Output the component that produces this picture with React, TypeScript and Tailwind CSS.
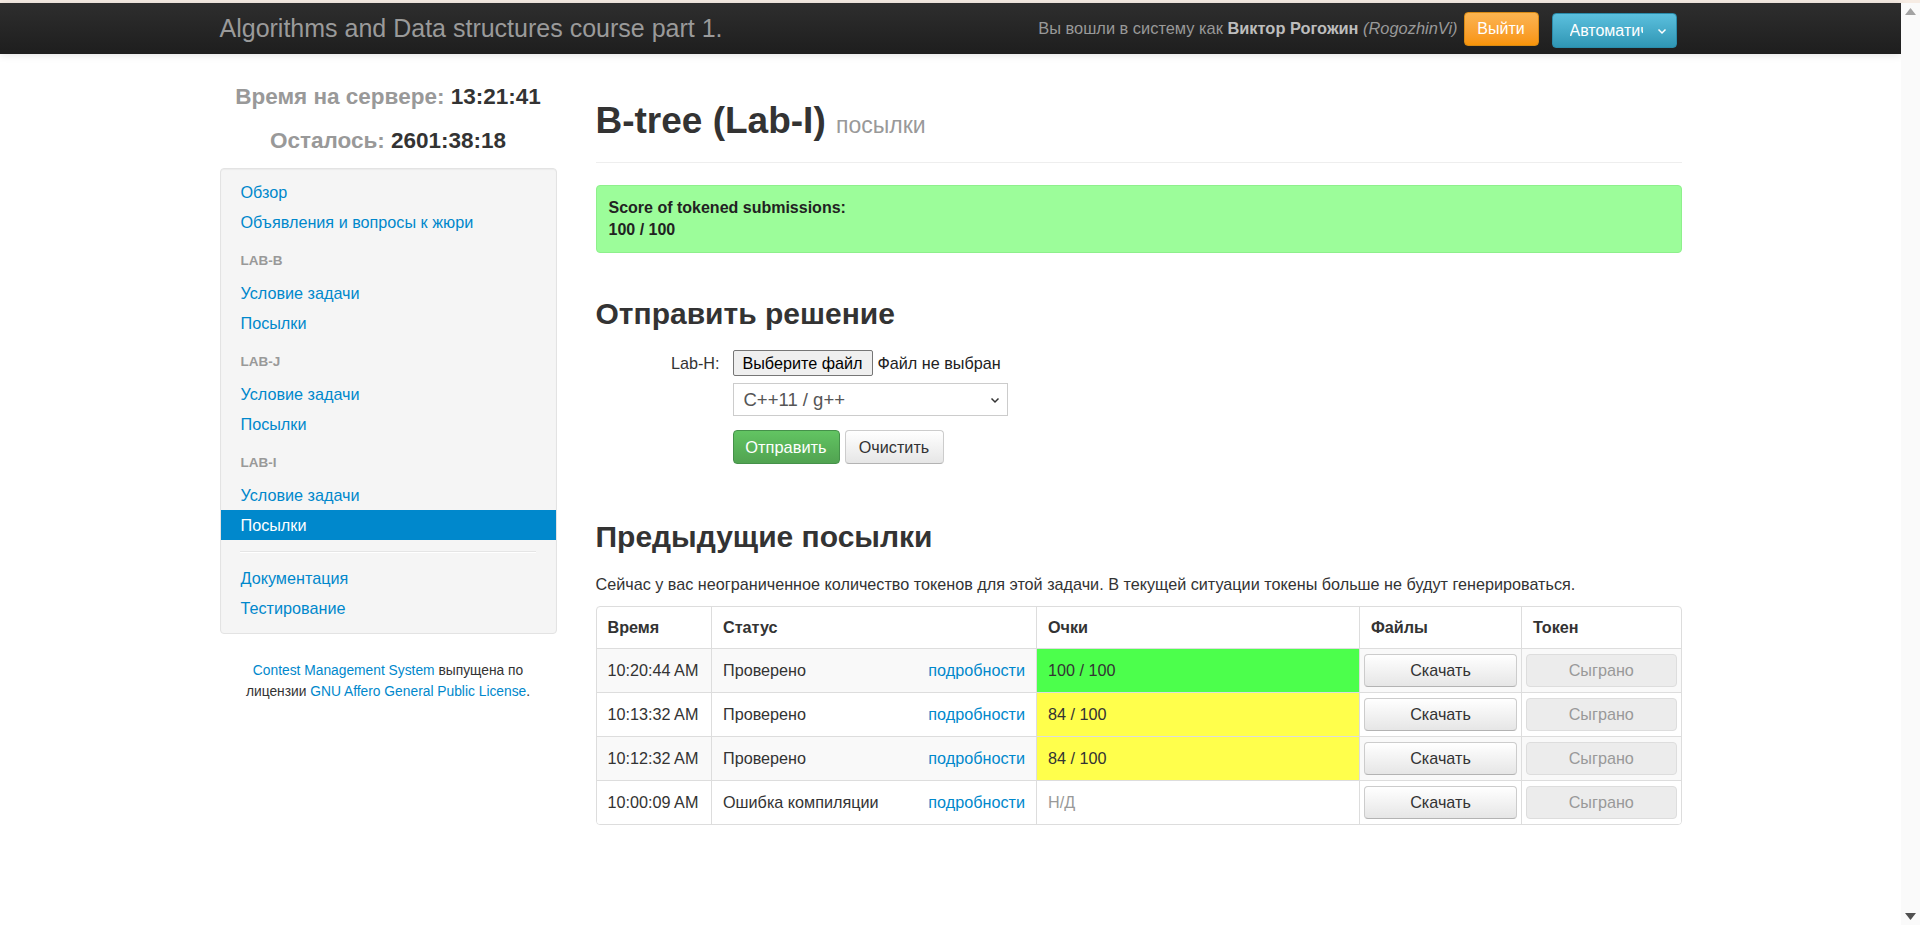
import React from 'react';

const navItems: { type: 'item' | 'header' | 'divider'; label?: string; active?: boolean }[] = [
  { type: 'item', label: 'Обзор' },
  { type: 'item', label: 'Объявления и вопросы к жюри' },
  { type: 'header', label: 'LAB-B' },
  { type: 'item', label: 'Условие задачи' },
  { type: 'item', label: 'Посылки' },
  { type: 'header', label: 'LAB-J' },
  { type: 'item', label: 'Условие задачи' },
  { type: 'item', label: 'Посылки' },
  { type: 'header', label: 'LAB-I' },
  { type: 'item', label: 'Условие задачи' },
  { type: 'item', label: 'Посылки', active: true },
  { type: 'divider' },
  { type: 'item', label: 'Документация' },
  { type: 'item', label: 'Тестирование' },
];

const submissions = [
  { time: '10:20:44 AM', status: 'Проверено', score: '100 / 100', tone: 'green', striped: true },
  { time: '10:13:32 AM', status: 'Проверено', score: '84 / 100', tone: 'yellow', striped: false },
  { time: '10:12:32 AM', status: 'Проверено', score: '84 / 100', tone: 'yellow', striped: true },
  { time: '10:00:09 AM', status: 'Ошибка компиляции', score: 'Н/Д', tone: 'none', striped: false },
];

function Navbar() {
  return (
    <div className="h-[51px] bg-linear-to-b from-[#2e2e2e] to-[#1e1e1e] shadow-[0_1px_8px_rgba(0,0,0,0.12)]">
      <div className="mx-auto flex h-full w-[1462px] items-center justify-between">
        <span className="text-[25px] text-[#9a9a9a]">Algorithms and Data structures course part 1.</span>
        <div className="mr-[5px] flex items-center">
          <span className="text-[16.4px] text-[#999]">
            Вы вошли в систему как <b className="text-[#bdbdbd]">Виктор Рогожин</b>{' '}
            <i>(RogozhinVi)</i>
          </span>
          <button
            type="button"
            className="ml-[6px] h-[34px] w-[75px] rounded-[4px] border border-[#d98a14] bg-linear-to-b from-[#fbb450] to-[#f89406] text-[16px] text-white"
          >
            Выйти
          </button>
          <div className="ml-[13px] mt-[4px] flex h-[35px] w-[125px] items-center rounded-[4px] border border-[#2a8cab] bg-linear-to-b from-[#5bc0de] to-[#2f96b4] pl-[17px] pr-[8px] text-[16px] text-white">
            <span className="w-[73px] overflow-hidden whitespace-nowrap">Автоматически</span>
            <svg width="12" height="12" viewBox="0 0 24 24" fill="none" stroke="white" strokeWidth="3" className="ml-auto">
              <path d="M5 9l7 7 7-7" />
            </svg>
          </div>
        </div>
      </div>
    </div>
  );
}

function Sidebar() {
  return (
    <div className="w-[337px] shrink-0">
      <div className="mt-[29px] text-center text-[22.5px] leading-[28px] font-bold text-[#999]">
        Время на сервере: <span className="text-[#333]">13:21:41</span>
      </div>
      <div className="mt-[16px] text-center text-[22.5px] leading-[28px] font-bold text-[#999]">
        Осталось: <span className="text-[#333]">2601:38:18</span>
      </div>
      <div className="mt-[13px] rounded-[4px] border border-[#e3e3e3] bg-[#f5f5f5] pt-[8px] pb-[10px] shadow-[inset_0_1px_1px_rgba(0,0,0,0.04)]">
        {navItems.map((it, i) => {
          if (it.type === 'divider') {
            return <div key={i} className="mt-[11px] mb-[10px] ml-[19px] mr-[20px] border-t border-b border-t-[#e5e5e5] border-b-white" />;
          }
          if (it.type === 'header') {
            return (
              <div key={i} className="mt-[7px] flex h-[34px] items-center px-[20px] text-[13.5px] font-bold text-[#999]">
                {it.label}
              </div>
            );
          }
          return (
            <div
              key={i}
              className={
                it.active
                  ? 'flex h-[30px] items-center bg-[#0088cc] px-[20px] text-[16.2px] text-white'
                  : 'flex h-[30px] items-center px-[20px] text-[16.2px] text-[#0088cc]'
              }
            >
              {it.label}
            </div>
          );
        })}
      </div>
      <p className="mt-[26px] px-[20px] text-center text-[13.8px] leading-[21px] text-[#333]">
        <span className="text-[#0088cc]">Contest Management System</span> выпущена по
        <br />
        лицензии <span className="text-[#0088cc]">GNU Affero General Public License</span>.
      </p>
    </div>
  );
}

function SubmitForm() {
  return (
    <div className="mt-[16px] flex flex-col">
      <div className="flex items-center">
        <label className="w-[124px] text-right text-[16.2px] text-[#333]">Lab-H:</label>
        <div className="ml-[13px] flex items-center">
          <span className="flex h-[26px] w-[140px] items-center justify-center rounded-[2px] border border-[#767676] bg-[#efefef] text-[16.2px] text-black">
            Выберите файл
          </span>
          <span className="ml-[5px] text-[16.2px] text-[#222]">Файл не выбран</span>
        </div>
      </div>
      <div className="mt-[7px] ml-[137px] flex h-[33px] w-[275px] items-center justify-between border border-[#ccc] bg-white pl-[10px] pr-[6px] text-[18.5px] text-[#555]">
        <span>C++11 / g++</span>
        <svg width="12" height="12" viewBox="0 0 24 24" fill="none" stroke="#333" strokeWidth="3">
          <path d="M5 9l7 7 7-7" />
        </svg>
      </div>
      <div className="mt-[14px] ml-[137px] flex gap-[5px]">
        <button
          type="button"
          className="h-[34px] w-[107px] rounded-[4px] border border-[#45914a] bg-linear-to-b from-[#62c462] to-[#51a351] text-[16.4px] text-white"
        >
          Отправить
        </button>
        <button
          type="button"
          className="h-[34px] w-[99px] rounded-[4px] border border-[#ccc] border-b-[#b3b3b3] bg-linear-to-b from-white to-[#e6e6e6] text-[16.2px] text-[#333]"
        >
          Очистить
        </button>
      </div>
    </div>
  );
}

function SubmissionsTable() {
  const td = 'border-t border-l border-[#ddd] px-[11px] align-middle';
  const tdFirst = 'border-t border-[#ddd] px-[11px] align-middle';
  const th = 'border-l border-[#ddd] px-[11px] text-left font-bold align-middle';
  return (
    <div className="mt-[11px] overflow-hidden rounded-[4px] border border-[#ddd]">
      <table className="w-full table-fixed border-collapse text-[16.2px] text-[#333]">
        <colgroup>
          <col className="w-[115px]" />
          <col className="w-[325px]" />
          <col className="w-[323px]" />
          <col className="w-[162px]" />
          <col />
        </colgroup>
        <thead>
          <tr className="h-[41px]">
            <th className="px-[11px] text-left font-bold align-middle">Время</th>
            <th className={th}>Статус</th>
            <th className={th}>Очки</th>
            <th className={th}>Файлы</th>
            <th className={th}>Токен</th>
          </tr>
        </thead>
        <tbody>
          {submissions.map((s) => (
            <tr key={s.time} className={s.striped ? 'h-[44px] bg-[#f9f9f9]' : 'h-[44px] bg-white'}>
              <td className={tdFirst}>{s.time}</td>
              <td className={td}>
                <div className="flex items-center justify-between">
                  <span>{s.status}</span>
                  <span className="text-[#0088cc]">подробности</span>
                </div>
              </td>
              <td
                className={
                  s.tone === 'green'
                    ? `${td} bg-[#4cff4c]`
                    : s.tone === 'yellow'
                      ? `${td} bg-[#ffff4c]`
                      : `${td} text-[#999]`
                }
              >
                {s.score}
              </td>
              <td className="border-t border-l border-[#ddd] px-[4px] py-[5px] align-middle">
                <div className="flex h-[33px] items-center justify-center rounded-[4px] border border-[#ccc] border-b-[#b3b3b3] bg-linear-to-b from-white to-[#e6e6e6] text-[#333]">
                  Скачать
                </div>
              </td>
              <td className="border-t border-l border-[#ddd] px-[4px] py-[5px] align-middle">
                <div className="flex h-[33px] items-center justify-center rounded-[4px] border border-[#ddd] bg-[#ececec] text-[#999]">
                  Сыграно
                </div>
              </td>
            </tr>
          ))}
        </tbody>
      </table>
    </div>
  );
}

export default function App() {
  return (
    <div className="flex h-[925px] flex-col overflow-hidden bg-white font-['Liberation_Sans',Arial,sans-serif]">
      <div className="h-[3px] shrink-0 bg-[#f6ece4]" />
      <div className="flex min-h-0 flex-1">
        <div className="flex-1">
          <Navbar />
          <div className="mx-auto flex w-[1462px] gap-[39px]">
            <Sidebar />
            <main className="flex-1 text-[#333]">
              <div className="border-b border-[#eee] pt-[45px] pb-[15px]">
                <h1 className="text-[37px] leading-[44px] font-bold">
                  B-tree (Lab-I) <span className="text-[23px] font-normal text-[#999]">посылки</span>
                </h1>
              </div>
              <div className="mt-[22px] rounded-[4px] border border-[#8ef08c] bg-[#9cfd9a] px-[12px] py-[11px] text-[16px] leading-[22px] font-bold text-[#222]">
                <div>Score of tokened submissions:</div>
                <div>100 / 100</div>
              </div>
              <h2 className="mt-[41px] text-[30px] leading-[40px] font-bold">Отправить решение</h2>
              <SubmitForm />
              <h2 className="mt-[53px] text-[30px] leading-[40px] font-bold">Предыдущие посылки</h2>
              <p className="mt-[16px] text-[16.2px] leading-[22px]">
                Сейчас у вас неограниченное количество токенов для этой задачи. В текущей ситуации токены больше не будут генерироваться.
              </p>
              <SubmissionsTable />
            </main>
          </div>
        </div>
        <div className="flex w-[19px] shrink-0 flex-col items-center justify-between bg-[#fafafa] py-[5px]">
          <svg width="11" height="7" viewBox="0 0 11 7">
            <path d="M0 7 5.5 0 11 7Z" fill="#a3a3a3" />
          </svg>
          <svg width="11" height="7" viewBox="0 0 11 7">
            <path d="M0 0 5.5 7 11 0Z" fill="#505050" />
          </svg>
        </div>
      </div>
    </div>
  );
}
